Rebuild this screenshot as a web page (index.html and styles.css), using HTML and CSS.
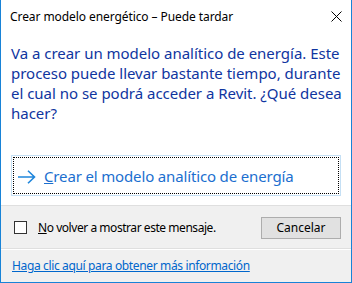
FILE: index.html
```html
<!DOCTYPE html>
<html lang="es">
<head>
<meta charset="utf-8">
<link rel="stylesheet" href="styles.css">
</head>
<body>
<div class="window">
  <div class="titlebar">
    <span class="title">Crear modelo energético – Puede tardar</span>
    <svg class="close" width="11" height="11" viewBox="0 0 11 11"><path d="M0.5 0.5 L10.5 10.5 M10.5 0.5 L0.5 10.5" stroke="#000" stroke-width="1"/></svg>
  </div>
  <div class="content">
    <p class="instruction">Va a crear un modelo analítico de energía. Este proceso puede llevar bastante tiempo, durante el cual no se podrá acceder a Revit. ¿Qué desea hacer?</p>
    <div class="cmdlink">
      <div class="focus">
        <svg class="arrow" width="18" height="14" viewBox="0 0 18 14"><path d="M0 7 H16.5 M10 0.7 L16.5 7 L10 13.3" fill="none" stroke="#1f86dc" stroke-width="1.6"/></svg>
        <span class="cmdtext"><u>C</u>rear el modelo analítico de energía</span>
      </div>
    </div>
  </div>
  <div class="footer">
    <div class="footrow">
      <label class="check"><span class="box"></span><span class="checktext"><u>N</u>o volver a mostrar este mensaje.</span></label>
      <button class="btn">Cancelar</button>
    </div>
    <div class="moreinfo">
      <a class="link" href="#">Haga clic aquí para obtener más información</a>
    </div>
  </div>
</div>
</body>
</html>
```
FILE: styles.css
```css
html, body {
  margin: 0;
  padding: 0;
  background: #fff;
}
.window {
  width: 352px;
  height: 283px;
  box-sizing: border-box;
  border: 1px solid #1883d7;
  border-top: none;
  display: flex;
  flex-direction: column;
  font-family: "Noto Sans", sans-serif;
  background: #fff;
}
.titlebar {
  height: 30px;
  display: flex;
  align-items: center;
  justify-content: space-between;
  padding: 2px 9px 0 9px;
  box-sizing: border-box;
}
.title {
  font-size: 12px;
  color: #000;
  letter-spacing: -0.08px;
}
.close {
  display: block;
  margin-top: 0;
}
.content {
  flex: 0 0 175px;
  padding: 13px 10px 0 10px;
  box-sizing: border-box;
}
.instruction {
  margin: 0 -6px 0 0;
  font-size: 15px;
  line-height: 20px;
  color: #0f35a0;
  letter-spacing: -0.02px;
}
.cmdlink {
  margin-top: 32px;
  height: 41px;
  border: 1px solid #c5e0f5;
  box-sizing: border-box;
  padding: 1px;
}
.focus {
  height: 100%;
  box-sizing: border-box;
  border: 1px dotted #000;
  display: flex;
  align-items: center;
  padding-left: 4px;
}
.arrow {
  display: block;
  margin-right: 8px;
  margin-top: 2px;
}
.cmdtext {
  font-size: 15px;
  color: #1b6fcf;
  letter-spacing: -0.15px;
  margin-top: 1px;
}
.cmdtext u {
  text-decoration-thickness: 1px;
}
.footer {
  flex: 1;
  background: #f0f0f0;
  border-top: 1px solid #dfdfdf;
  display: flex;
  flex-direction: column;
}
.footrow {
  height: 42px;
  display: flex;
  align-items: center;
  justify-content: space-between;
  padding: 0 10px 0 13px;
  border-bottom: 1px solid #dfdfdf;
  box-shadow: 0 1px 0 #fff;
}
.check {
  display: flex;
  align-items: center;
  font-size: 12px;
  color: #000;
}
.box {
  width: 13px;
  height: 13px;
  box-sizing: border-box;
  border: 1px solid #333;
  background: #fff;
  margin-right: 11px;
}
.checktext {
  letter-spacing: -0.45px;
}
.btn {
  width: 80px;
  height: 22px;
  background: #e1e1e1;
  border: 1px solid #adadad;
  font-family: "Noto Sans", sans-serif;
  font-size: 12px;
  color: #000;
  padding: 0;
  margin-top: 1px;
}
.moreinfo {
  flex: 1;
  display: flex;
  align-items: center;
  padding-left: 11px;
}
.link {
  font-size: 12px;
  color: #0066cc;
  letter-spacing: -0.36px;
}
```
